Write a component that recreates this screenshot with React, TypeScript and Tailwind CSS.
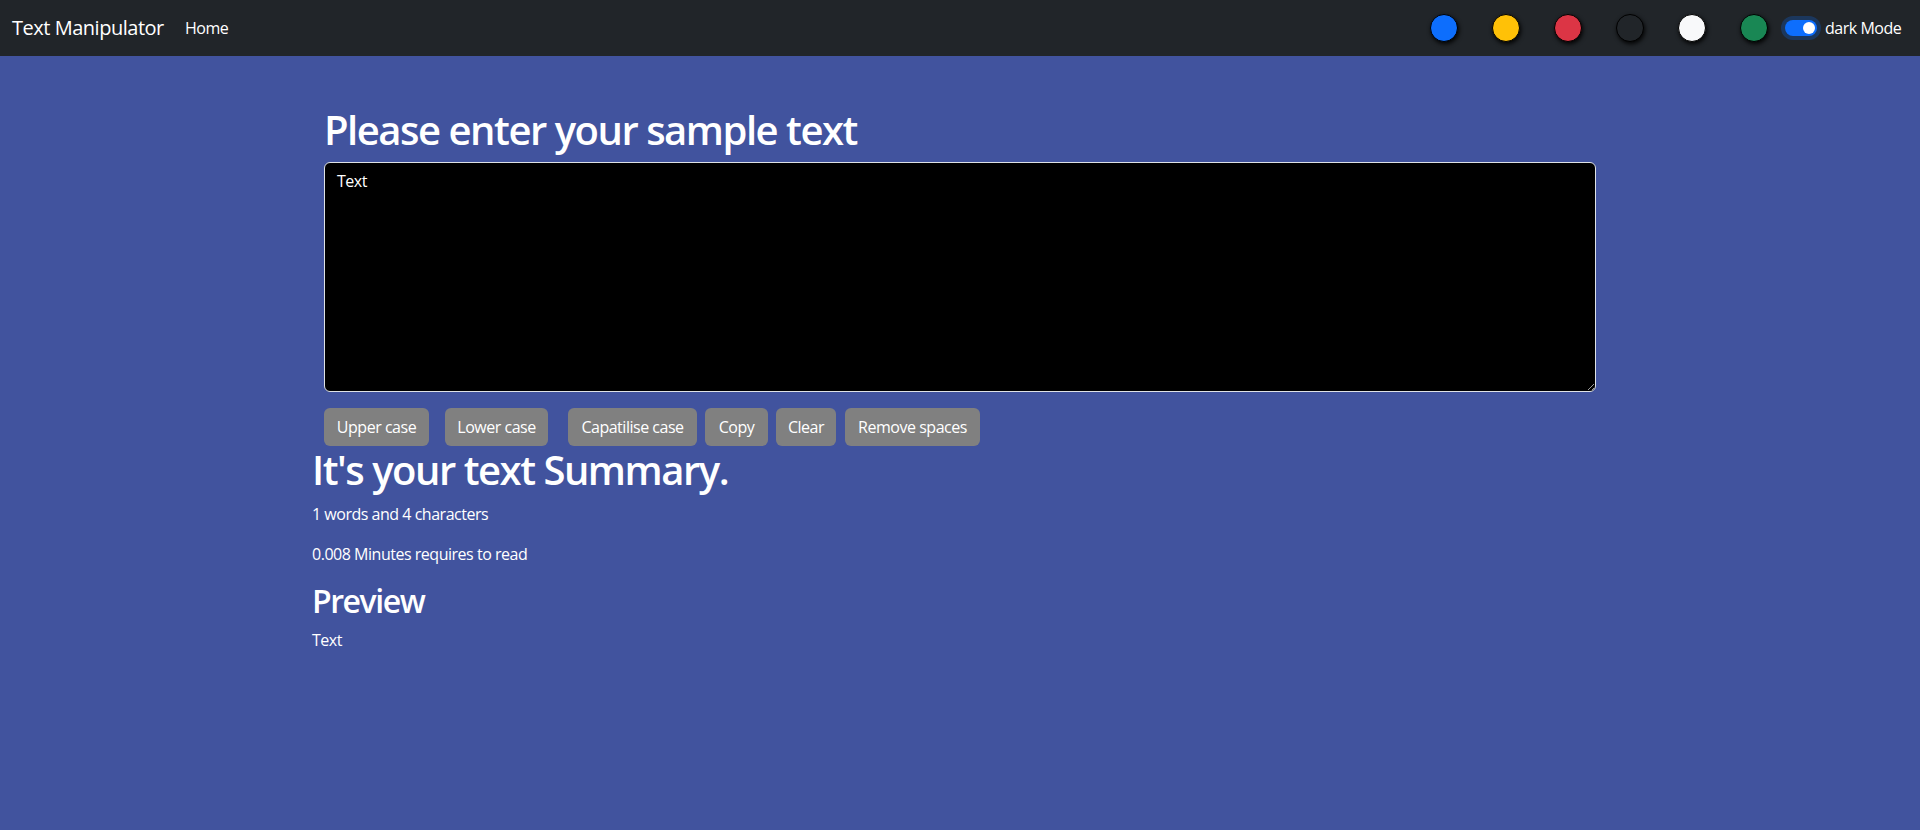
import React from "react";

const font = "font-['Open_Sans','Noto_Sans',sans-serif] tracking-[-0.03em]";

function Circle({ color }: { color: string }) {
  return (
    <div
      className={`w-[28px] h-[28px] rounded-full border-[1.5px] border-black shadow-[1px_2px_4px_rgba(0,0,0,0.9)] ${color}`}
    />
  );
}

export default function App() {
  return (
    <div className={`min-h-[830px] bg-[#41539e] text-white ${font}`}>
      <nav className="h-[56px] bg-[#212529] flex items-center pl-[12px] pr-[20px]">
        <span className="w-[148px] whitespace-nowrap text-[20px] leading-[30px] text-white">Text Manipulator</span>
        <span className="ml-[25px] text-[16px] leading-[24px] text-white">Home</span>
        <div className="ml-auto flex items-center">
          <div className="flex items-center gap-[34px]">
            <Circle color="bg-[#0d6efd]" />
            <Circle color="bg-[#ffc107]" />
            <Circle color="bg-[#dc3545]" />
            <Circle color="bg-[#212529]" />
            <Circle color="bg-[#f8f9fa]" />
            <Circle color="bg-[#198754]" />
          </div>
          <div className="ml-[17px] w-[32px] h-[16px] rounded-full bg-[#0d6efd] shadow-[0_0_0_4px_rgba(13,110,253,0.25)] flex items-center justify-end pr-[2px]">
            <div className="w-[12px] h-[12px] rounded-full bg-white" />
          </div>
          <span className="ml-[8px] w-[75px] whitespace-nowrap text-[16px] leading-[24px]">dark Mode</span>
        </div>
      </nav>

      <main className="mx-auto w-[1320px] px-[12px] pt-[50px]">
        <div className="px-[12px]">
          <h1 className="text-[40px] leading-[48px] font-semibold tracking-[-0.037em] mb-[8px]">Please enter your sample text</h1>
          <textarea
            className="block w-full h-[230px] bg-black text-white border border-[#dee2e6] rounded-[6px] px-[12px] py-[6px] text-[16px] leading-[24px] tracking-[-0.03em] outline-none"
            rows={9}
            defaultValue="Text"
          />
          <div className="mt-[16px] flex h-[38px] text-[16px] leading-[24px]">
            <button className="w-[105px] h-[38px] rounded-[6px] bg-[#808080] text-white">Upper case</button>
            <button className="ml-[16px] w-[103px] h-[38px] rounded-[6px] bg-[#808080] text-white">Lower case</button>
            <button className="ml-[20px] w-[129px] h-[38px] rounded-[6px] bg-[#808080] text-white">Capatilise case</button>
            <button className="ml-[8px] w-[63px] h-[38px] rounded-[6px] bg-[#808080] text-white">Copy</button>
            <button className="ml-[8px] w-[60px] h-[38px] rounded-[6px] bg-[#808080] text-white">Clear</button>
            <button className="ml-[9px] w-[135px] h-[38px] rounded-[6px] bg-[#808080] text-white">Remove spaces</button>
          </div>
        </div>
        <h1 className="text-[40px] leading-[48px] font-semibold tracking-[-0.037em] mb-[8px]">It's your text Summary.</h1>
        <p className="text-[16px] leading-[24px] mb-[16px]">1 words and 4 characters</p>
        <p className="text-[16px] leading-[24px] mb-[16px]">0.008 Minutes requires to read</p>
        <h2 className="text-[32px] leading-[38.4px] font-semibold tracking-[-0.045em] mb-[8px]">Preview</h2>
        <p className="text-[16px] leading-[24px]">Text</p>
      </main>
    </div>
  );
}
